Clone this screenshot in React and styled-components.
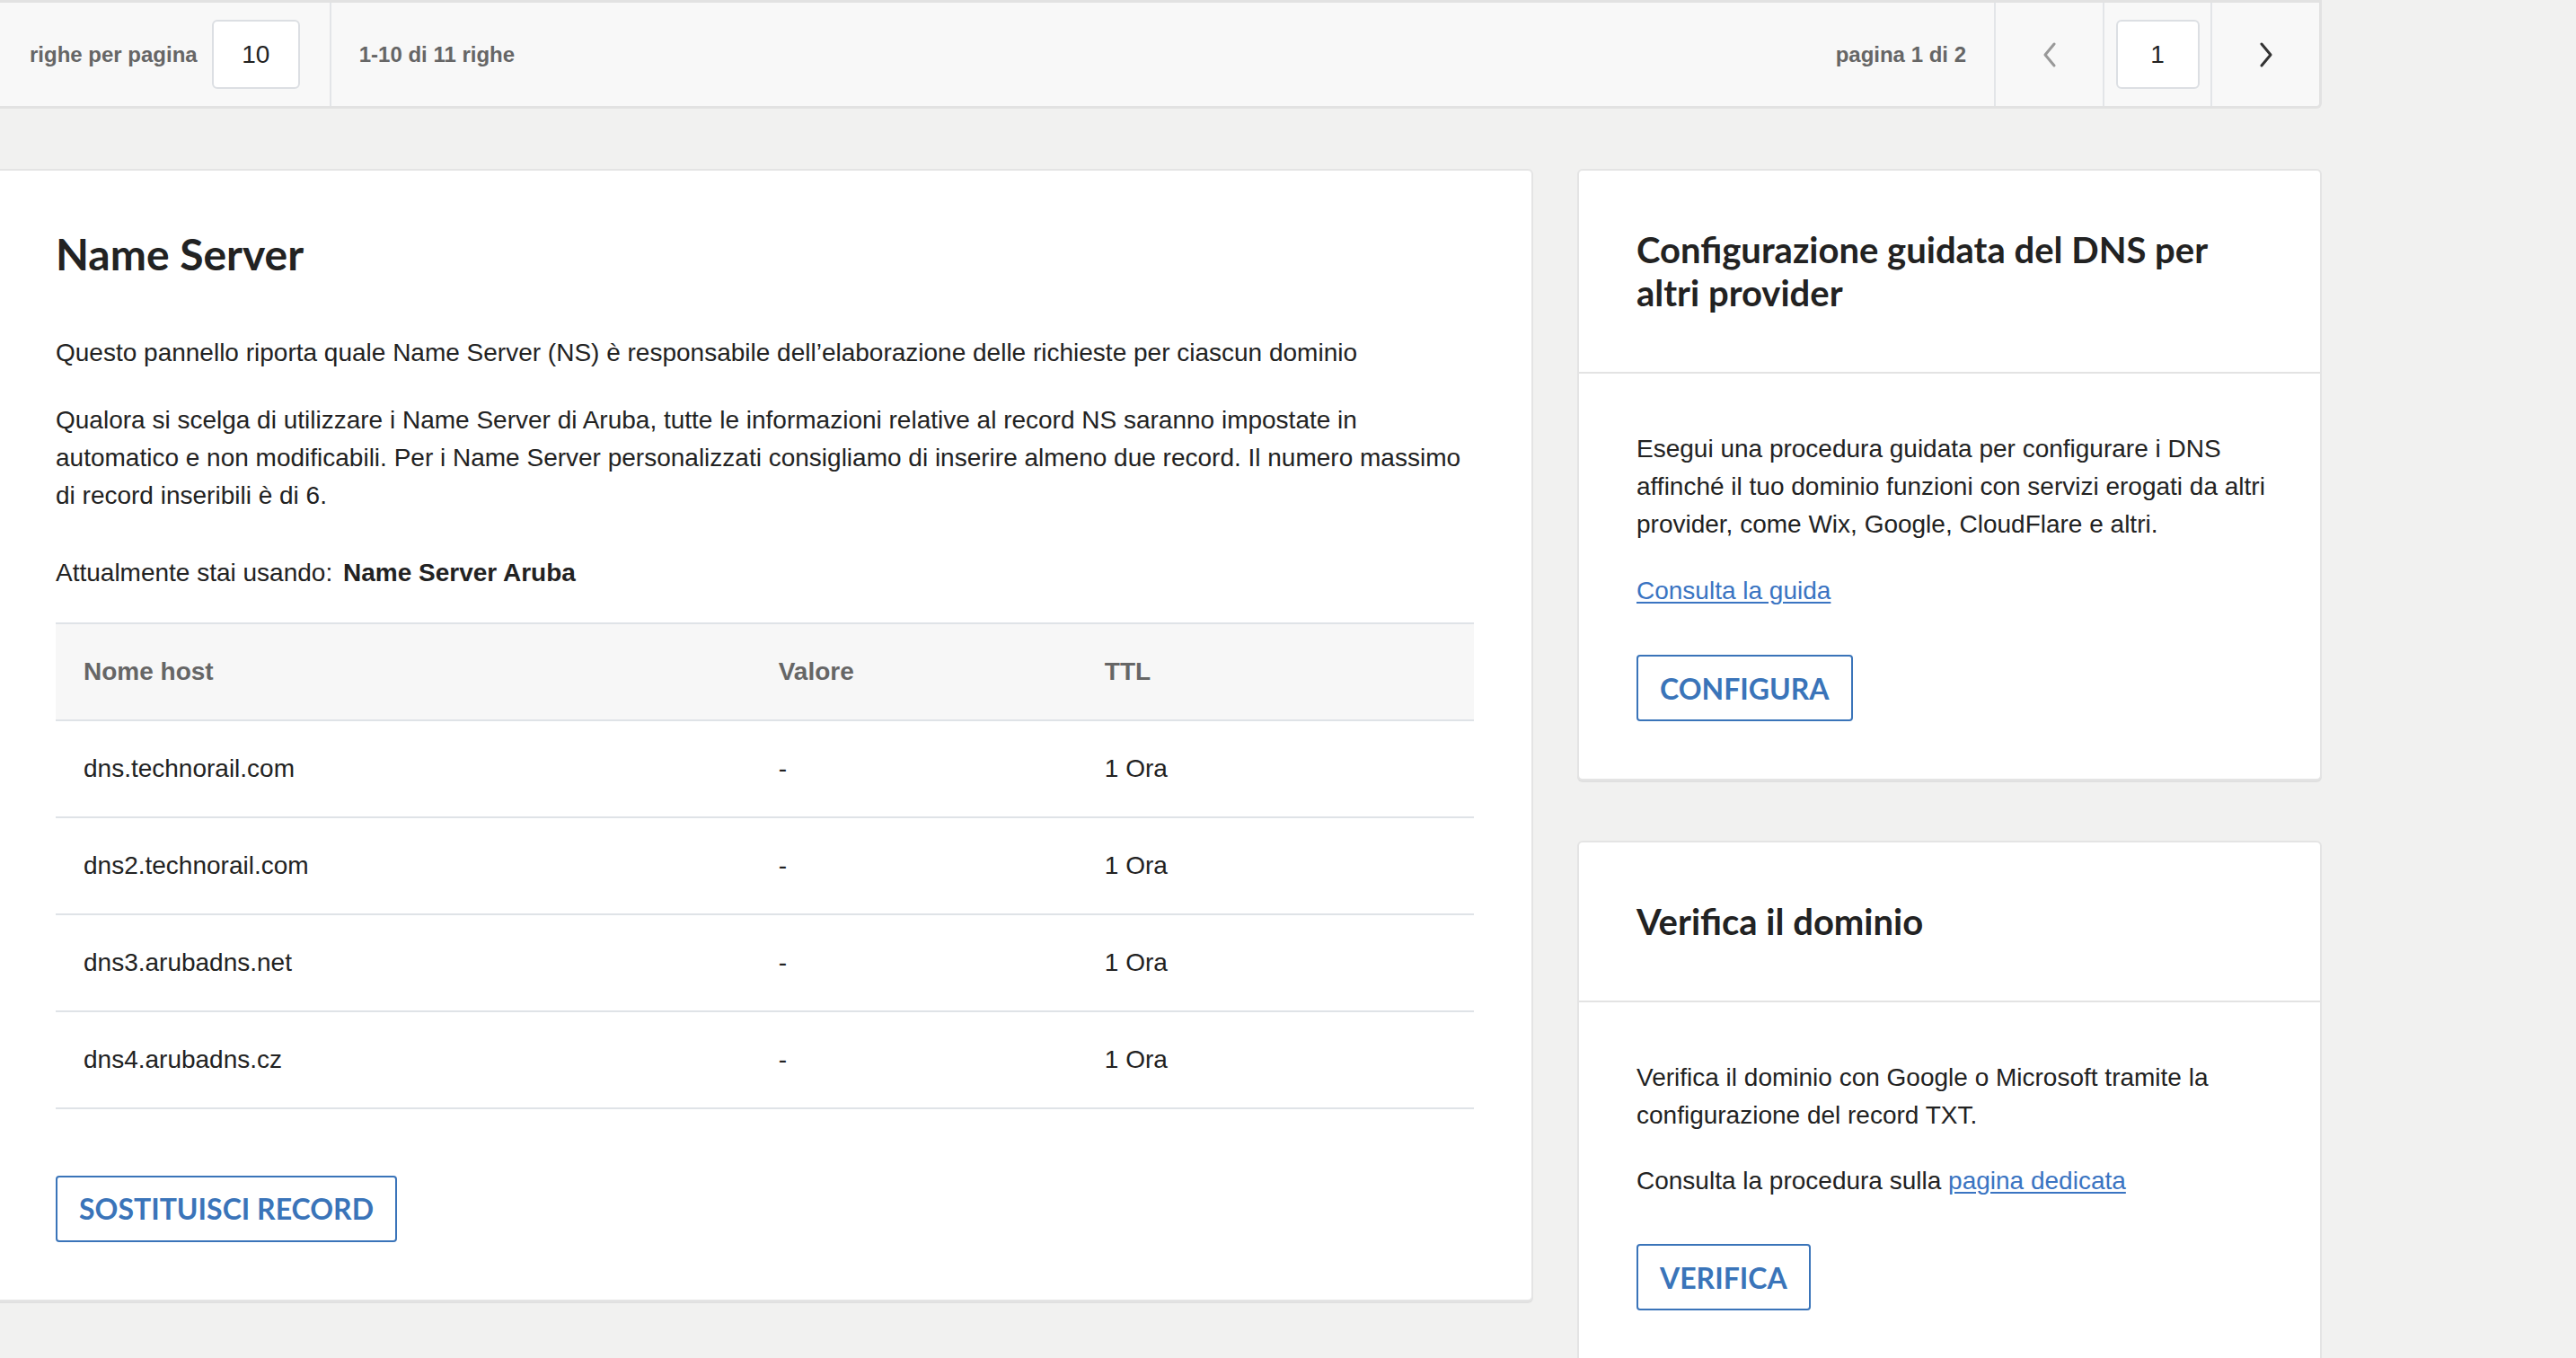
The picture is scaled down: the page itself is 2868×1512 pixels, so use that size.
import React from 'react';
import styled, { createGlobalStyle } from 'styled-components';

const GlobalStyle = createGlobalStyle`
  html, body {
    margin: 0;
    padding: 0;
    background: #f1f1f0;
  }
  body {
    font-family: "Liberation Sans", Arial, sans-serif;
    color: #222;
  }
  * { box-sizing: border-box; }
`;

const Page = styled.div`
  width: 2585px;
`;

const PagerBar = styled.div`
  display: flex;
  align-items: stretch;
  height: 121px;
  background: #f8f8f8;
  border: 3px solid #e2e2e2;
  border-left: none;
  border-radius: 0 0 6px 0;
`;

const PagerCell = styled.div`
  display: flex;
  align-items: center;
  justify-content: ${props => props.center ? 'center' : 'flex-start'};
  gap: 16px;
  padding: 0 ${props => props.pad || 0}px;
  width: ${props => props.w ? `${props.w}px` : 'auto'};
  flex: ${props => props.grow ? 1 : 'none'};
  border-right: ${props => props.last ? 'none' : '2px solid #e3e5e8'};
`;

const PagerText = styled.span`
  font-size: 24px;
  font-weight: bold;
  color: #666;
  white-space: nowrap;
  flex-shrink: 0;
  margin-left: ${props => props.push ? 'auto' : 0};
`;

const NumBox = styled.div`
  width: ${props => props.w}px;
  height: 77px;
  flex-shrink: 0;
  background: #fff;
  border: 2px solid #dcdfe3;
  border-radius: 6px;
  display: flex;
  align-items: center;
  justify-content: center;
  font-size: 28px;
  color: #222;
`;

const Chevron = ({ dir, color }) => (
  <svg width="18" height="28" viewBox="0 0 18 28" fill="none">
    <polyline
      points={dir === 'left' ? '14,2 4,14 14,26' : '4,2 14,14 4,26'}
      stroke={color}
      strokeWidth="3"
      strokeLinecap="round"
      strokeLinejoin="round"
    />
  </svg>
);

const Main = styled.div`
  display: flex;
  align-items: flex-start;
  gap: 49px;
  margin-top: 67px;
`;

const Card = styled.div`
  background: #fff;
  border: 2px solid #e4e4e4;
  border-radius: 6px;
  box-shadow: 0 2px 0 #e0e0e0;
  width: ${props => props.w}px;
`;

const LeftCard = styled(Card)`
  border-left: none;
  border-radius: 0 6px 6px 0;
  padding: 64px 64px 64px 62px;
`;

const SideColumn = styled.div`
  display: flex;
  flex-direction: column;
  gap: 67px;
  width: 829px;
`;

const CardHeader = styled.div`
  padding: 64px;
  border-bottom: 2px solid #e3e3e3;
`;

const CardBody = styled.div`
  padding: 63px 48px 64px 64px;
`;

const Title = styled.h1`
  font-family: Lato, "Liberation Sans", sans-serif;
  font-weight: bold;
  font-size: ${props => props.size || 40}px;
  line-height: 1.2;
  color: #222;
  margin: 0;
`;

const Text = styled.p`
  font-size: 28px;
  line-height: 42px;
  color: #222;
  margin: 0 0 ${props => props.mb || 0}px 0;
`;

const Strong = styled.strong`
  font-weight: bold;
  margin-left: 4px;
`;

const Link = styled.a`
  color: #3a74c2;
  text-decoration: underline;
  text-underline-offset: 3px;
  cursor: pointer;
`;

const Table = styled.div`
  border-top: 2px solid #dfe3e7;
`;

const Row = styled.div`
  display: grid;
  grid-template-columns: 49% 23% 28%;
  height: 108px;
  align-items: center;
  background: ${props => props.head ? '#f7f7f7' : '#fff'};
  border-bottom: 2px solid #dfe3e7;
`;

const Cell = styled.div`
  padding-left: 31px;
  font-size: 28px;
  font-weight: ${props => props.head ? 'bold' : 'normal'};
  color: ${props => props.head ? '#666' : '#222'};
`;

const OutlineButton = styled.button`
  display: inline-flex;
  align-items: center;
  justify-content: center;
  height: 74px;
  padding: 0 24px;
  margin-top: ${props => props.mt || 0}px;
  background: #fff;
  border: 2px solid #3a74b9;
  border-radius: 4px;
  font-family: Lato, "Liberation Sans", sans-serif;
  font-weight: bold;
  font-size: 32px;
  color: #3a74b9;
  cursor: pointer;
`;

const records = [
  ['dns.technorail.com', '-', '1 Ora'],
  ['dns2.technorail.com', '-', '1 Ora'],
  ['dns3.arubadns.net', '-', '1 Ora'],
  ['dns4.arubadns.cz', '-', '1 Ora'],
];

export default function App() {
  return (
    <Page>
      <GlobalStyle />
      <PagerBar>
        <PagerCell pad={33}>
          <PagerText>righe per pagina</PagerText>
          <NumBox w={98}>10</NumBox>
        </PagerCell>
        <PagerCell pad={31} grow>
          <PagerText>1-10 di 11 righe</PagerText>
          <PagerText push>pagina 1 di 2</PagerText>
        </PagerCell>
        <PagerCell w={121} center>
          <Chevron dir="left" color="#999" />
        </PagerCell>
        <PagerCell w={120} center>
          <NumBox w={93}>1</NumBox>
        </PagerCell>
        <PagerCell w={119} center last>
          <Chevron dir="right" color="#333" />
        </PagerCell>
      </PagerBar>

      <Main>
        <LeftCard w={1707}>
          <Title size={48}>Name Server</Title>
          <Text mb={33} style={{ marginTop: 60 }}>
            Questo pannello riporta quale Name Server (NS) è responsabile dell’elaborazione delle richieste per ciascun dominio
          </Text>
          <Text mb={44}>
            Qualora si scelga di utilizzare i Name Server di Aruba, tutte le informazioni relative al record NS saranno impostate in automatico e non modificabili. Per i Name Server personalizzati consigliamo di inserire almeno due record. Il numero massimo di record inseribili è di 6.
          </Text>
          <Text mb={34}>
            Attualmente stai usando: <Strong>Name Server Aruba</Strong>
          </Text>
          <Table>
            <Row head>
              <Cell head>Nome host</Cell>
              <Cell head>Valore</Cell>
              <Cell head>TTL</Cell>
            </Row>
            {records.map(r => (
              <Row key={r[0]}>
                <Cell>{r[0]}</Cell>
                <Cell>{r[1]}</Cell>
                <Cell>{r[2]}</Cell>
              </Row>
            ))}
          </Table>
          <OutlineButton mt={74}>SOSTITUISCI RECORD</OutlineButton>
        </LeftCard>

        <SideColumn>
          <Card w={829}>
            <CardHeader>
              <Title>Configurazione guidata del DNS per altri provider</Title>
            </CardHeader>
            <CardBody>
              <Text mb={32}>
                Esegui una procedura guidata per configurare i DNS affinché il tuo dominio funzioni con servizi erogati da altri provider, come Wix, Google, CloudFlare e altri.
              </Text>
              <Text>
                <Link>Consulta la guida</Link>
              </Text>
              <OutlineButton mt={50}>CONFIGURA</OutlineButton>
            </CardBody>
          </Card>

          <Card w={829}>
            <CardHeader>
              <Title>Verifica il dominio</Title>
            </CardHeader>
            <CardBody>
              <Text mb={31}>
                Verifica il dominio con Google o Microsoft tramite la configurazione del record TXT.
              </Text>
              <Text>
                Consulta la procedura sulla <Link>pagina dedicata</Link>
              </Text>
              <OutlineButton mt={49}>VERIFICA</OutlineButton>
            </CardBody>
          </Card>
        </SideColumn>
      </Main>
    </Page>
  );
}
